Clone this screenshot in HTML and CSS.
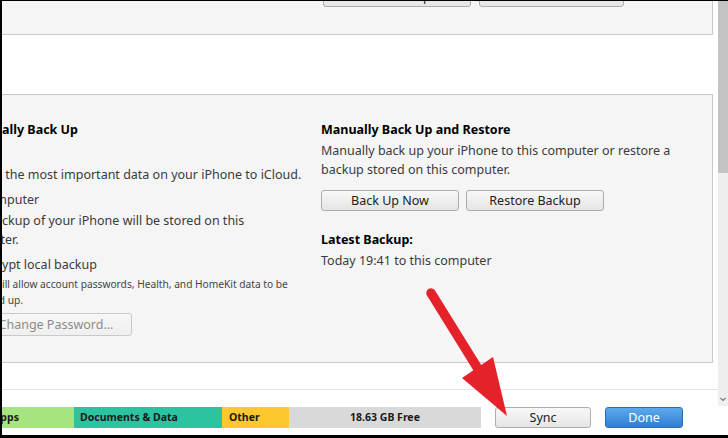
FILE: index.html
```html
<!DOCTYPE html>
<html>
<head>
<meta charset="utf-8">
<title>iTunes Backups</title>
<link rel="stylesheet" href="styles.css">
</head>
<body>
<div class="frame">
  <div class="main">
    <div class="scroll">
      <section class="panel panel-top">
        <button class="btn top-btn tb1">Check for Update</button>
        <button class="btn top-btn tb2">Restore iPhone...</button>
      </section>
      <section class="panel panel-backup">
        <div class="col col-left">
          <div class="ln h"><span class="pre"><span>Automatic</span></span>ally Back Up</div>
          <div class="ln l-icloud"><span class="pre"><span>iCloud</span></span></div>
          <div class="ln l-desc1"><span class="pre"><span>Back up</span></span> the most important data on your iPhone to iCloud.</div>
          <div class="ln l-comp"><span class="pre p-m"><span>This com</span></span>puter</div>
          <div class="ln l-desc2"><span class="pre"><span>A full ba</span></span>ckup of your iPhone will be stored on this</div>
          <div class="ln"><span class="pre p-e"><span>comput</span></span>er.</div>
          <div class="ln l-enc"><span class="pre"><span>Encr</span></span>ypt local backup</div>
          <div class="ln sm l-small"><span class="pre"><span>This w</span></span>ill allow account passwords, Health, and HomeKit data to be</div>
          <div class="ln sm"><span class="pre p-d"><span>backed</span></span> up.</div>
          <button class="btn btn-change" disabled>Change Password...</button>
        </div>
        <div class="col col-right">
          <div class="ln h">Manually Back Up and Restore</div>
          <div class="ln r-desc">Manually back up your iPhone to this computer or restore a</div>
          <div class="ln">backup stored on this computer.</div>
          <div class="btn-row">
            <button class="btn btn-act">Back Up Now</button>
            <button class="btn btn-act">Restore Backup</button>
          </div>
          <div class="ln h r-latest">Latest Backup:</div>
          <div class="ln r-today">Today 19:41 to this computer</div>
        </div>
      </section>
    </div>
    <footer class="footer">
      <div class="storage">
        <div class="seg seg-apps"><span class="pre p-ap"><span>Ap</span></span>ps</div>
        <div class="seg seg-docs">Documents &amp; Data</div>
        <div class="seg seg-other">Other</div>
        <div class="seg seg-free">18.63 GB Free</div>
      </div>
      <button class="btn btn-sync">Sync</button>
      <button class="btn btn-done">Done</button>
    </footer>
  </div>
  <div class="scrollbar">
    <div class="thumb"></div>
    <div class="track"></div>
    <div class="sb-down">
      <svg width="10" height="13" viewBox="0 0 10 13"><polyline points="2.5,5 5,7.5 7.5,5" fill="none" stroke="#7a7a7a" stroke-width="1.2"/></svg>
    </div>
  </div>
</div>
<svg class="annot" width="728" height="438" viewBox="0 0 728 438">
  <line x1="431" y1="293" x2="480" y2="372" stroke="#e5222a" stroke-width="9.5" stroke-linecap="round"/>
  <polygon points="507,416 493,357 462,378" fill="#e5222a"/>
</svg>
</body>
</html>
```
FILE: styles.css
```css
* { box-sizing: border-box; }
html, body { margin: 0; padding: 0; }
body {
  width: 728px;
  height: 438px;
  overflow: hidden;
  position: relative;
  background: #fff;
  font-family: "Segoe UI", "Noto Sans", "Open Sans", sans-serif;
  font-size: 12.5px;
  color: #3b3b3b;
}
.frame {
  display: flex;
  width: 728px;
  height: 438px;
  border-top: 1px solid #000;
  border-left: 2px solid #000;
  border-bottom: 3px solid #000;
}
.main {
  width: 716px;
  display: flex;
  flex-direction: column;
}
.scroll {
  height: 388px;
  overflow: hidden;
}
.panel {
  background: #f5f5f5;
  border: 1px solid #c9c9c9;
  border-left: none;
  width: 711px;
}
.panel-top {
  height: 34px;
  border-top: none;
  display: flex;
  gap: 8px;
  padding-left: 321px;
}
.btn {
  font-family: inherit;
  font-size: 12.5px;
  color: #222;
  border: 1px solid #adadad;
  border-radius: 3px;
  background: linear-gradient(#f8f8f8, #e5e5e5);
  padding: 0;
  height: 21px;
  line-height: 19px;
  text-align: center;
  white-space: nowrap;
}
.top-btn { margin-top: -15px; }
.tb1 { width: 148px; padding-left: 18px; }
.tb2 { width: 145px; }

.panel-backup {
  margin-top: 59px;
  height: 269px;
  display: flex;
  padding-top: 25px;
}
.col { display: flex; flex-direction: column; align-items: flex-start; }
.col-left { width: 305px; overflow: hidden; }
.col-right { margin-left: 14px; }
.ln {
  white-space: nowrap;
  line-height: 19px;
  height: 19px;
}
.h { font-weight: bold; color: #000; }
.sm { font-size: 10.2px; line-height: 16px; height: 16px; color: #444; }
.pre {
  display: inline-block;
  width: 0;
  direction: rtl;
  white-space: nowrap;
}
.pre > span { direction: ltr; unicode-bidi: isolate; }
.p-m { width: 5px; }
.p-e { width: 3px; }
.p-d { width: 3px; }
.p-ap { width: 5px; }

.l-icloud { margin-top: 3px; }
.l-desc1 { margin-top: 4px; }
.l-comp { margin-top: 6px; }
.l-desc2 { margin-top: 2px; }
.l-enc { margin-top: 6px; }
.l-small { margin-top: 2px; }
.btn-change {
  margin-top: 5px;
  margin-left: -22px;
  width: 152px;
  height: 23px;
  line-height: 21px;
  color: #8c8c8c;
  border-color: #c9c9c9;
  background: linear-gradient(#f7f7f7, #efefef);
}

.r-desc { margin-top: 2px; }
.btn-row { display: flex; gap: 7px; margin-top: 11px; }
.btn-act { width: 138px; }
.r-latest { margin-top: 19px; }
.r-today { margin-top: 2px; }

.footer {
  flex: 1;
  border-top: 1px solid #e4e4e4;
  padding-top: 17px;
  display: flex;
  align-items: flex-start;
}
.storage { display: flex; height: 21px; }
.seg {
  height: 21px;
  line-height: 21px;
  font-size: 10.5px;
  font-weight: bold;
  color: #1a1a1a;
  white-space: nowrap;
  overflow: hidden;
}
.seg-apps { width: 72px; background: #a5e57f; }
.seg-docs { width: 148px; background: #2cc4a0; padding-left: 6px; }
.seg-other { width: 67px; background: #fcc82d; padding-left: 7px; }
.seg-free { width: 192px; background: #d9d9d9; text-align: center; }
.btn-sync { width: 96px; margin-left: 14px; }
.btn-done {
  width: 78px;
  margin-left: 14px;
  color: #fff;
  border-color: #2a6bb6;
  background: linear-gradient(#5ea9ec, #2e7fd4);
}

.scrollbar {
  width: 10px;
  display: flex;
  flex-direction: column;
}
.thumb { height: 172px; background: #c3c3c3; }
.track { height: 220px; background: #eeeeee; }
.sb-down { height: 13px; background: #efefef; display: flex; }

.annot {
  position: absolute;
  left: 0;
  top: 0;
  pointer-events: none;
}
```
